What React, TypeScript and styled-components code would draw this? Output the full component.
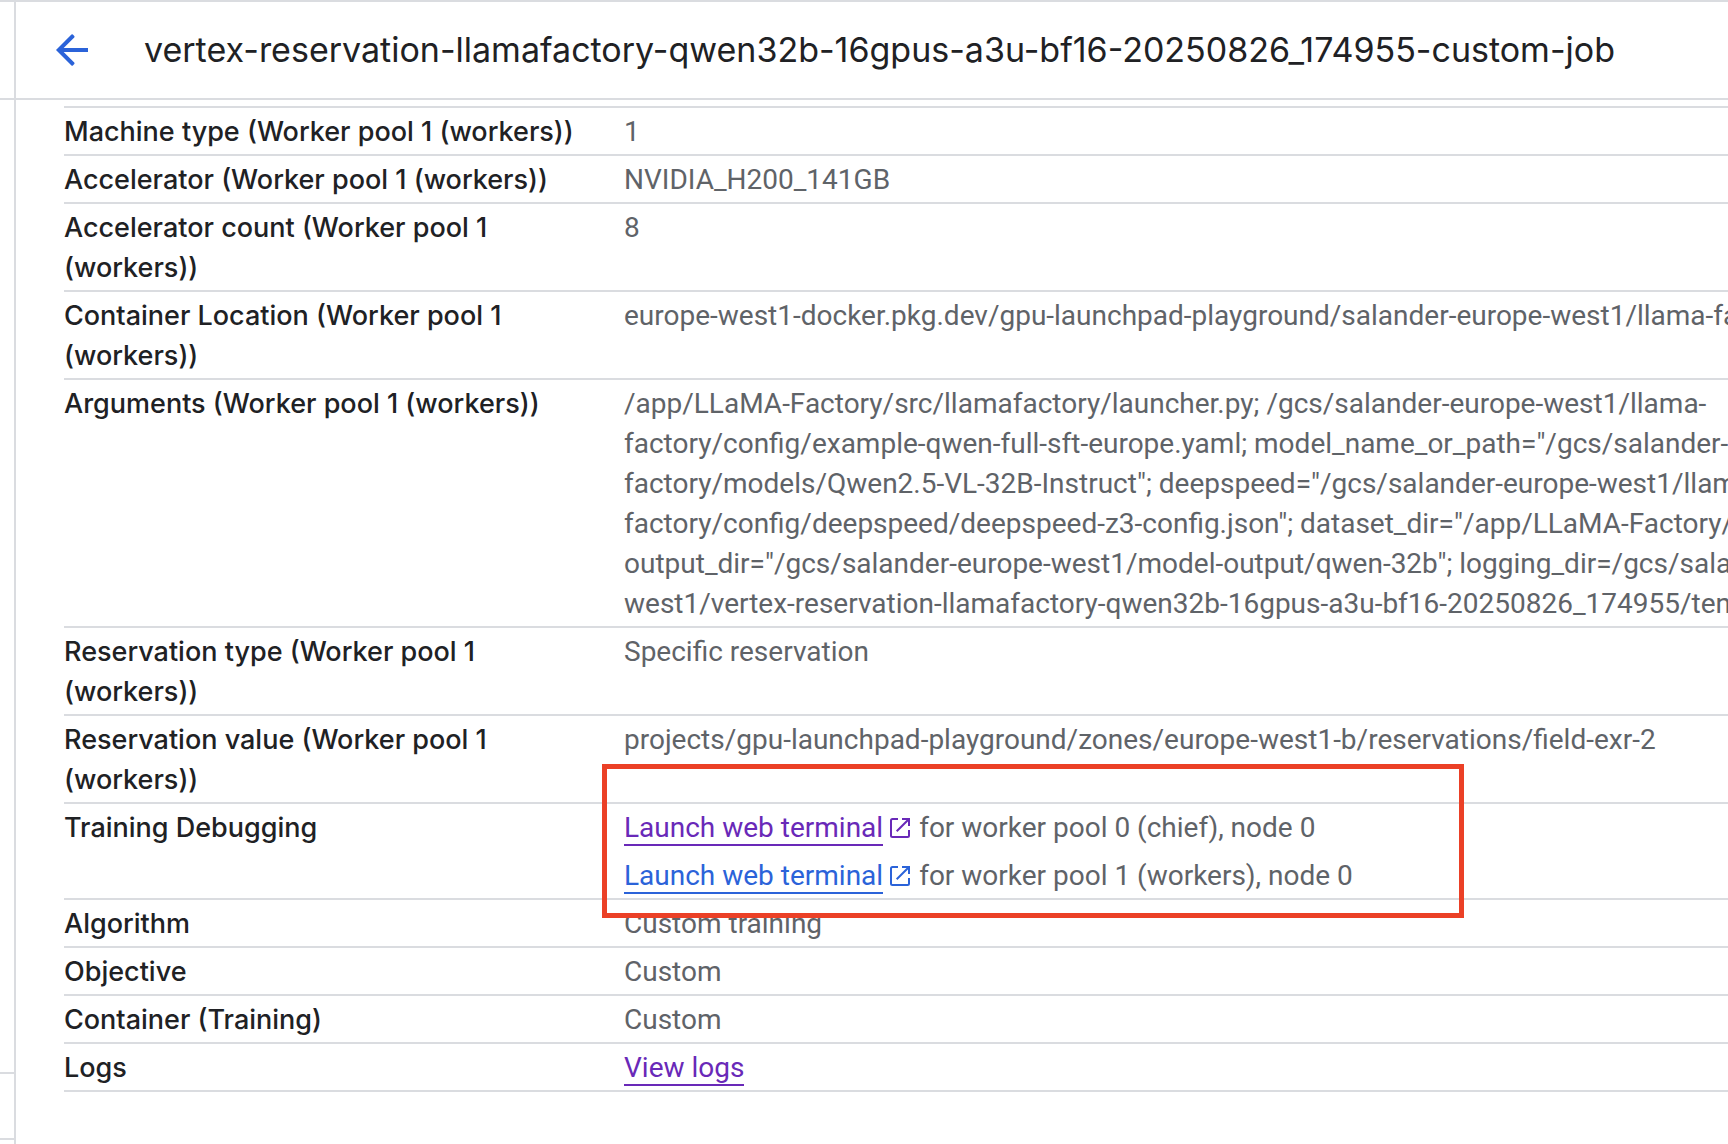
import React from "react";
import styled, { createGlobalStyle } from "styled-components";

const colors = {
  line: "#dadce0",
  heading: "#202124",
  body: "#5f6368",
  link: "#2b63d9",
  visited: "#6929b8",
  highlight: "#eb4026",
};

const GlobalStyle = createGlobalStyle`
  *, *::before, *::after { box-sizing: border-box; }
  body {
    margin: 0;
    background: #fff;
    font-family: Roboto, "Liberation Sans", sans-serif;
    color: ${colors.body};
  }
`;

const Page = styled.div`
  display: flex;
  min-height: 100vh;
  border-top: 2px solid ${colors.line};
`;

const Rail = styled.aside`
  flex: none;
  display: flex;
  flex-direction: column;
  justify-content: space-between;
  width: 16px;
  padding-bottom: 4px;
  border-right: 2px solid ${colors.line};
`;

const RailHeader = styled.div`
  height: 98px;
  border-bottom: 2px solid ${colors.line};
`;

const RailFooter = styled.div`
  height: 68px;
  border-top: 2px solid ${colors.line};
  border-bottom: 2px solid ${colors.line};
`;

const Main = styled.main`
  flex: 1;
  min-width: 0;
  overflow: hidden;
`;

const Header = styled.header`
  display: flex;
  align-items: center;
  gap: 48px;
  height: 98px;
  padding-left: 32px;
  border-bottom: 2px solid ${colors.line};
`;

const BackButton = styled.button`
  flex: none;
  display: flex;
  width: 48px;
  height: 48px;
  padding: 0;
  border: 0;
  background: none;
  color: ${colors.link};
  cursor: pointer;
`;

const Title = styled.h1`
  margin: 0;
  font: 400 34px/44px Inter, Roboto, sans-serif;
  color: ${colors.heading};
  white-space: nowrap;
`;

const Content = styled.div`
  padding: 6px 0 48px 48px;
`;

const Table = styled.table`
  width: 100%;
  table-layout: fixed;
  border-collapse: separate;
  border-spacing: 0;
  border-bottom: 2px solid ${colors.line};
`;

const Label = styled.th`
  width: 560px;
  padding: 4px 24px 2px 0;
  border-top: 2px solid ${colors.line};
  font: 500 27px/40px Inter, Roboto, sans-serif;
  color: ${colors.heading};
  text-align: left;
  vertical-align: top;
`;

const Value = styled.td`
  position: relative;
  padding: 4px 0 2px;
  border-top: 2px solid ${colors.line};
  font-size: 28px;
  line-height: 40px;
  white-space: nowrap;
  vertical-align: top;
`;

const Line = styled.div``;

const TerminalList = styled.div`
  display: grid;
  gap: 8px;
`;

const TerminalItem = styled.div`
  display: flex;
  align-items: center;
  gap: 9px;
`;

const Link = styled.a<{ $visited?: boolean }>`
  color: ${(p) => (p.$visited ? colors.visited : colors.link)};
  text-decoration: none;
`;

const LinkText = styled.span`
  border-bottom: 2px solid currentColor;
`;

const TerminalLink = styled(Link)`
  display: flex;
  align-items: center;
  gap: 7px;
`;

const Highlight = styled.div`
  position: absolute;
  z-index: 1;
  top: -40px;
  left: -22px;
  width: 862px;
  height: 154px;
  border: 5px solid ${colors.highlight};
  pointer-events: none;
`;

function BackIcon() {
  return (
    <svg width="48" height="48" viewBox="0 0 24 24" fill="currentColor" aria-hidden="true">
      <path d="M20 11H7.83l5.3-5.3a.5.5 0 0 0 0-.7l-.7-.7a.5.5 0 0 0-.7 0L4 12l7.73 7.7a.5.5 0 0 0 .7 0l.7-.7a.5.5 0 0 0 0-.7L7.83 13H20v-2z" />
    </svg>
  );
}

function OpenInNewIcon() {
  return (
    <svg width="20" height="20" viewBox="0 0 20 20" fill="none" stroke="currentColor" strokeWidth="2" aria-hidden="true">
      <path d="M8 1H2.500A1.500 1.500 0 0 0 1 2.500v15A1.500 1.500 0 0 0 2.500 19h15a1.500 1.500 0 0 0 1.500-1.500V12" />
      <path d="M12 1h7v7M18.500 1.500 6.700 13.300" />
    </svg>
  );
}

function Terminal({ target, visited }: { target: string; visited?: boolean }) {
  return (
    <TerminalItem>
      <TerminalLink href="#terminal" $visited={visited}>
        <span>
          <LinkText>Launch web terminal</LinkText>
        </span>
        <OpenInNewIcon />
      </TerminalLink>
      <span>{target}</span>
    </TerminalItem>
  );
}

const argumentLines = [
  "/app/LLaMA-Factory/src/llamafactory/launcher.py; /gcs/salander-europe-west1/llama-",
  'factory/config/example-qwen-full-sft-europe.yaml; model_name_or_path="/gcs/salander-',
  'factory/models/Qwen2.5-VL-32B-Instruct"; deepspeed="/gcs/salander-europe-west1/llam',
  'factory/config/deepspeed/deepspeed-z3-config.json"; dataset_dir="/app/LLaMA-Factory/',
  'output_dir="/gcs/salander-europe-west1/model-output/qwen-32b"; logging_dir=/gcs/sala',
  "west1/vertex-reservation-llamafactory-qwen32b-16gpus-a3u-bf16-20250826_174955/ten",
];

const rows: { label: string; value: React.ReactNode }[] = [
  { label: "Machine type (Worker pool 1 (workers))", value: "1" },
  { label: "Accelerator (Worker pool 1 (workers))", value: "NVIDIA_H200_141GB" },
  { label: "Accelerator count (Worker pool 1 (workers))", value: "8" },
  {
    label: "Container Location (Worker pool 1 (workers))",
    value: "europe-west1-docker.pkg.dev/gpu-launchpad-playground/salander-europe-west1/llama-fa",
  },
  {
    label: "Arguments (Worker pool 1 (workers))",
    value: argumentLines.map((line) => <Line key={line}>{line}</Line>),
  },
  { label: "Reservation type (Worker pool 1 (workers))", value: "Specific reservation" },
  {
    label: "Reservation value (Worker pool 1 (workers))",
    value: "projects/gpu-launchpad-playground/zones/europe-west1-b/reservations/field-exr-2",
  },
  {
    label: "Training Debugging",
    value: (
      <>
        <TerminalList>
          <Terminal visited target="for worker pool 0 (chief), node 0" />
          <Terminal target="for worker pool 1 (workers), node 0" />
        </TerminalList>
        <Highlight />
      </>
    ),
  },
  { label: "Algorithm", value: "Custom training" },
  { label: "Objective", value: "Custom" },
  { label: "Container (Training)", value: "Custom" },
  {
    label: "Logs",
    value: (
      <Link href="#logs" $visited>
        <LinkText>View logs</LinkText>
      </Link>
    ),
  },
];

export default function App() {
  return (
    <>
      <GlobalStyle />
      <Page>
        <Rail>
          <RailHeader />
          <RailFooter />
        </Rail>
        <Main>
          <Header>
            <BackButton type="button" aria-label="Back">
              <BackIcon />
            </BackButton>
            <Title>vertex-reservation-llamafactory-qwen32b-16gpus-a3u-bf16-20250826_174955-custom-job</Title>
          </Header>
          <Content>
            <Table>
              <tbody>
                {rows.map(({ label, value }) => (
                  <tr key={label}>
                    <Label scope="row">{label}</Label>
                    <Value>{value}</Value>
                  </tr>
                ))}
              </tbody>
            </Table>
          </Content>
        </Main>
      </Page>
    </>
  );
}
